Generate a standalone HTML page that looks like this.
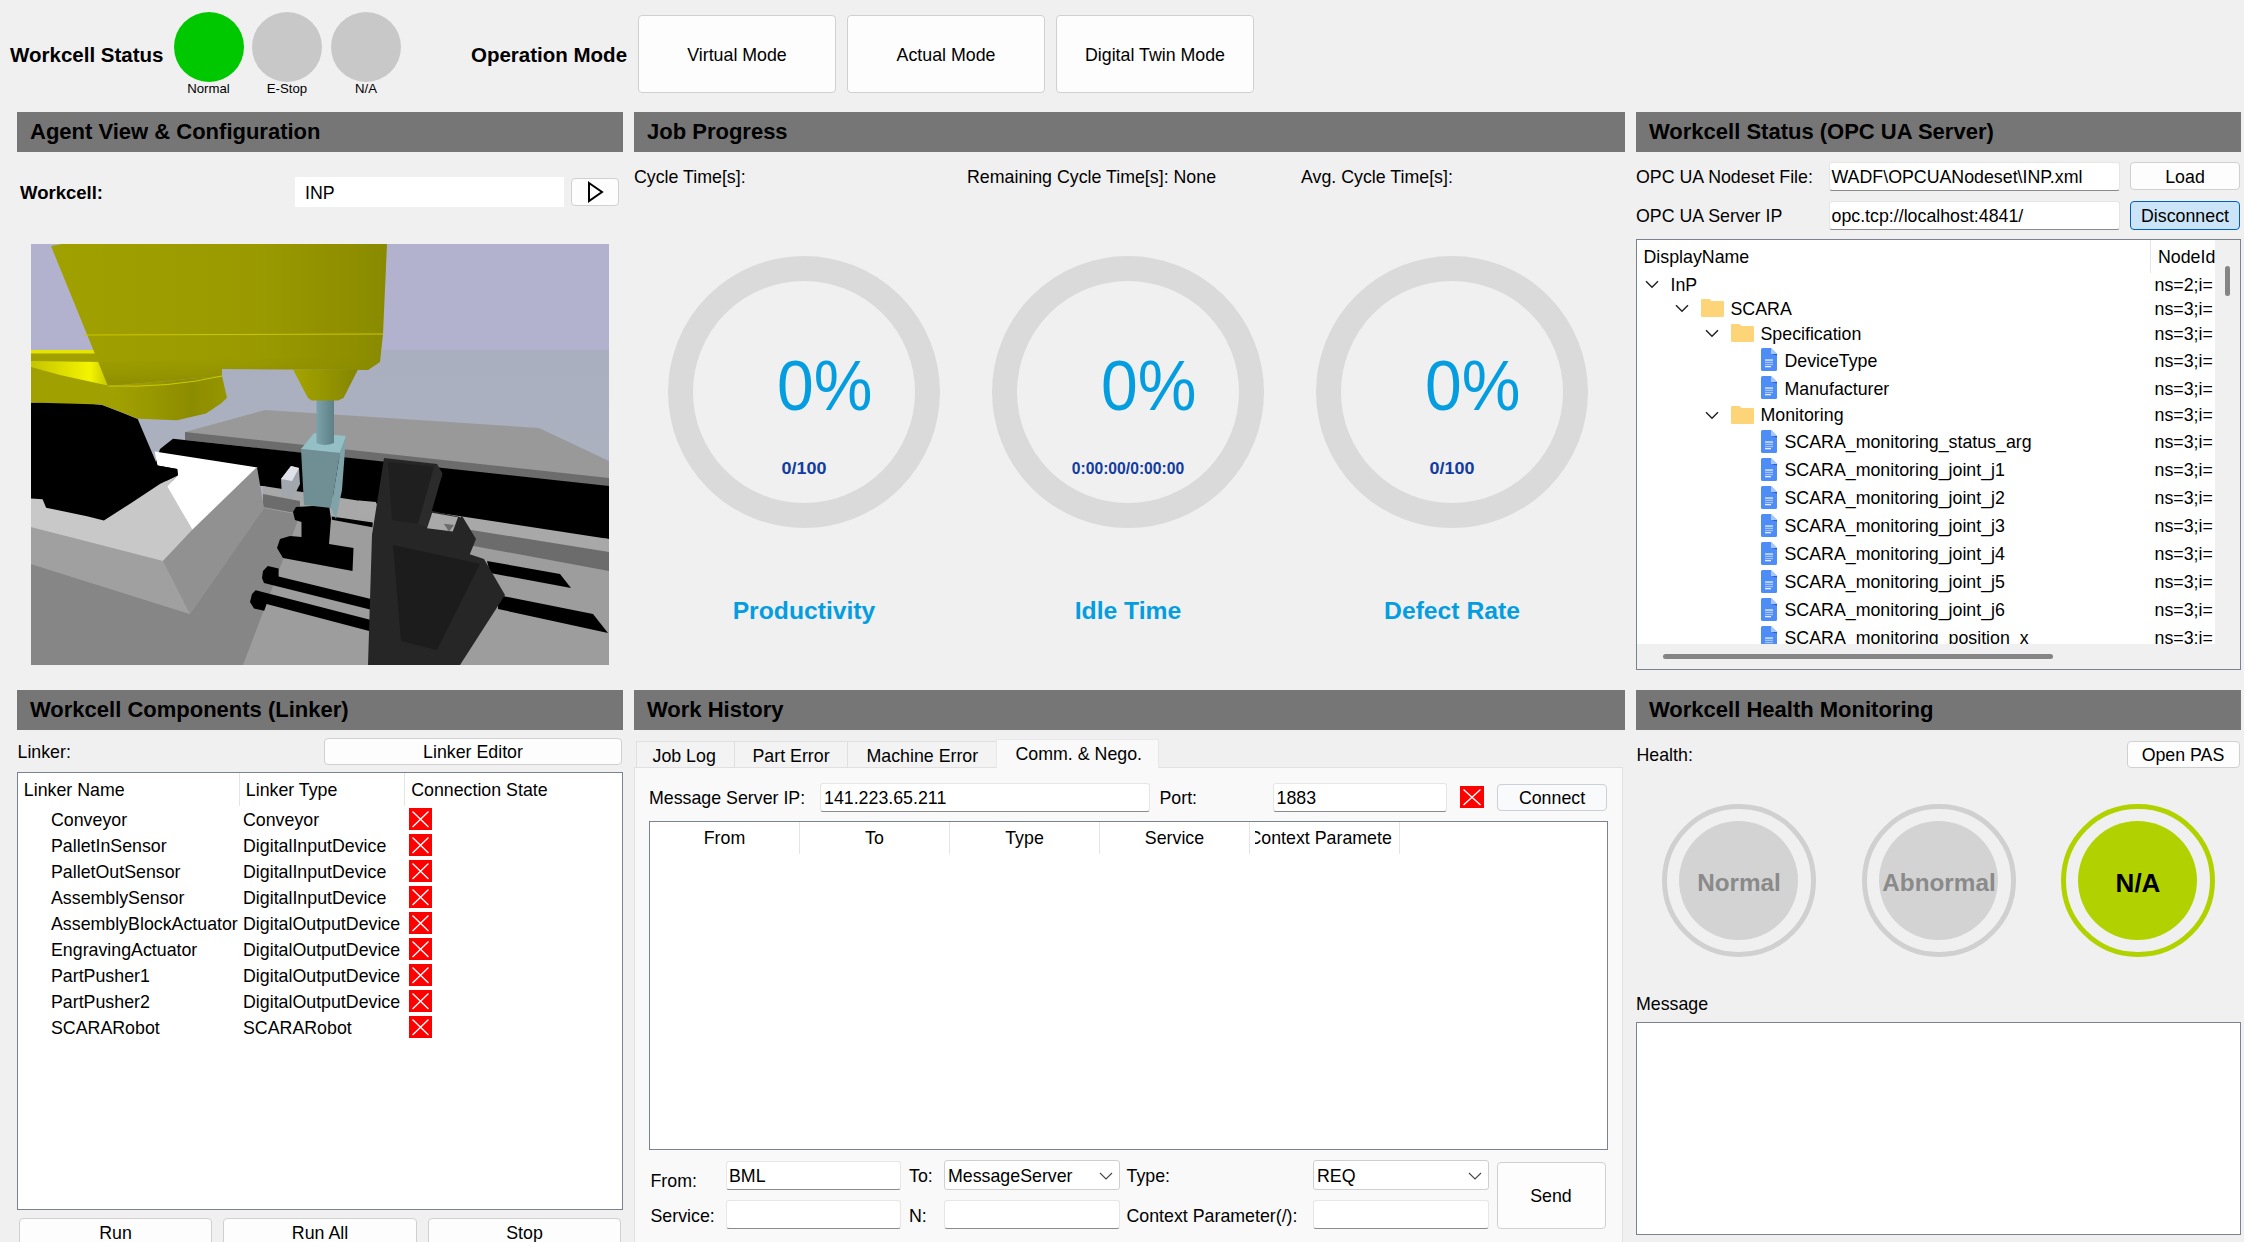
<!DOCTYPE html>
<html><head><meta charset="utf-8">
<style>
*{box-sizing:border-box;margin:0;padding:0}
html,body{width:2244px;height:1242px;overflow:hidden;background:#f0f0f0;font-family:"Liberation Sans",sans-serif;color:#000}
.a{position:absolute;white-space:nowrap}
</style></head><body>
<div class="a" style="left:10px;top:44.65px;font-size:20.5px;line-height:20.5px;font-weight:bold;">Workcell Status</div>
<div class="a" style="left:174px;top:12px;width:70px;height:70px;border-radius:50%;background:#00c800"></div>
<div class="a" style="left:252px;top:12px;width:70px;height:70px;border-radius:50%;background:#c8c8c8"></div>
<div class="a" style="left:331px;top:12px;width:70px;height:70px;border-radius:50%;background:#c8c8c8"></div>
<div class="a" style="left:158.5px;top:82.43px;font-size:13.2px;line-height:13.2px;width:100px;text-align:center;">Normal</div>
<div class="a" style="left:237px;top:82.43px;font-size:13.2px;line-height:13.2px;width:100px;text-align:center;">E-Stop</div>
<div class="a" style="left:316px;top:82.43px;font-size:13.2px;line-height:13.2px;width:100px;text-align:center;">N/A</div>
<div class="a" style="left:471px;top:44.65px;font-size:20.5px;line-height:20.5px;font-weight:bold;">Operation Mode</div>
<div class="a" style="left:638px;top:15px;width:198px;height:78px;background:#fdfdfd;border:1px solid #d0d0d0;border-radius:4px;"></div>
<div class="a" style="left:638px;top:46.93px;font-size:17.8px;line-height:17.8px;width:198px;text-align:center;">Virtual Mode</div>
<div class="a" style="left:847px;top:15px;width:198px;height:78px;background:#fdfdfd;border:1px solid #d0d0d0;border-radius:4px;"></div>
<div class="a" style="left:847px;top:46.93px;font-size:17.8px;line-height:17.8px;width:198px;text-align:center;">Actual Mode</div>
<div class="a" style="left:1056px;top:15px;width:198px;height:78px;background:#fdfdfd;border:1px solid #d0d0d0;border-radius:4px;"></div>
<div class="a" style="left:1056px;top:46.93px;font-size:17.8px;line-height:17.8px;width:198px;text-align:center;">Digital Twin Mode</div>
<div class="a" style="left:17px;top:112px;width:606px;height:40px;background:#767676"></div>
<div class="a" style="left:30px;top:121.18px;font-size:22px;line-height:22px;font-weight:bold;">Agent View &amp; Configuration</div>
<div class="a" style="left:634px;top:112px;width:991px;height:40px;background:#767676"></div>
<div class="a" style="left:647px;top:121.18px;font-size:22px;line-height:22px;font-weight:bold;">Job Progress</div>
<div class="a" style="left:1636px;top:112px;width:605px;height:40px;background:#767676"></div>
<div class="a" style="left:1649px;top:121.18px;font-size:22px;line-height:22px;font-weight:bold;">Workcell Status (OPC UA Server)</div>
<div class="a" style="left:17px;top:690px;width:606px;height:40px;background:#767676"></div>
<div class="a" style="left:30px;top:699.18px;font-size:22px;line-height:22px;font-weight:bold;">Workcell Components (Linker)</div>
<div class="a" style="left:634px;top:690px;width:991px;height:40px;background:#767676"></div>
<div class="a" style="left:647px;top:699.18px;font-size:22px;line-height:22px;font-weight:bold;">Work History</div>
<div class="a" style="left:1636px;top:690px;width:605px;height:40px;background:#767676"></div>
<div class="a" style="left:1649px;top:699.18px;font-size:22px;line-height:22px;font-weight:bold;">Workcell Health Monitoring</div>
<div class="a" style="left:20px;top:184.34px;font-size:18.5px;line-height:18.5px;font-weight:bold;">Workcell:</div>
<div class="a" style="left:295px;top:177px;width:269px;height:30px;background:#fff"></div>
<div class="a" style="left:305px;top:184.93px;font-size:17.8px;line-height:17.8px;">INP</div>
<div class="a" style="left:571px;top:178px;width:48px;height:28px;background:#fdfdfd;border:1px solid #d0d0d0;border-radius:4px;"></div>
<svg class="a" style="left:571px;top:178px" width="48" height="28" viewBox="0 0 48 28"><path d="M18 5 L31 14 L18 23 Z" fill="none" stroke="#000" stroke-width="2"/></svg>
<svg class="a" style="left:31px;top:244px" width="578" height="421" viewBox="31 244 578 421">
<defs>
<linearGradient id="flr" x1="0" y1="0" x2="0" y2="1"><stop offset="0" stop-color="#a9afbf"/><stop offset="1" stop-color="#b0b4c0"/></linearGradient>
<linearGradient id="arm" x1="0" y1="0" x2="1" y2="0"><stop offset="0" stop-color="#a0a000"/><stop offset="0.6" stop-color="#9a9a00"/><stop offset="1" stop-color="#8a8a00"/></linearGradient>
<linearGradient id="streak" x1="0" y1="0" x2="1" y2="0"><stop offset="0" stop-color="#c4c400"/><stop offset="0.75" stop-color="#f4f400"/><stop offset="1" stop-color="#c0c000"/></linearGradient><linearGradient id="link" x1="0" y1="0" x2="1" y2="0.3"><stop offset="0" stop-color="#b8b800"/><stop offset="0.5" stop-color="#e8e800"/><stop offset="1" stop-color="#a6a600"/></linearGradient>
<linearGradient id="cone" x1="0" y1="0" x2="1" y2="0"><stop offset="0" stop-color="#a4a400"/><stop offset="1" stop-color="#858500"/></linearGradient>
<linearGradient id="shaft" x1="0" y1="0" x2="1" y2="0"><stop offset="0" stop-color="#7aa2aa"/><stop offset="1" stop-color="#5e7f86"/></linearGradient>
</defs>
<rect x="31" y="244" width="578" height="421" fill="#b2b2cf"/>
<rect x="31" y="350" width="578" height="315" fill="url(#flr)"/>
<polygon fill="#999999" points="185,432 265,410 539,428 609,461 609,479 185,433"/>
<polygon fill="#6c6c6c" points="185,432 609,478 609,487 185,440"/>
<polygon fill="#000" points="160,449 173,438.7 609,486 609,539 350,512 300,496 263,486 150,480"/>
<polygon fill="#a8a8a8" points="263,486 609,539 609,572 263,508"/>
<polygon fill="#6c6c6c" points="263,494 300,501 300,514 263,508"/><polygon fill="#6c6c6c" points="440,525 609,552 609,572 440,544"/><polygon fill="#000" points="331.8,516.6 372.8,522.6 372.2,530 331.8,523"/>
<polygon fill="#9d9d9d" points="31,540 263,507 609,571 609,665 31,665"/>
<polygon fill="#868686" points="31,564 190,614 264,508 300,515 262,615 243,665 31,665"/>
<polygon fill="#a0a0a0" points="31,527 163,561 190,614 31,564"/>
<polygon fill="#c8c8c8" points="31,498 160.3,483.8 177.9,475.3 167.3,486.6 192.7,530.3 163,561 31,527"/>
<polygon fill="#ffffff" points="154.6,451.4 257.5,467.6 192.7,530.3 167.3,486.6 177.9,475.3 177.2,469 157.5,465.5"/>
<polygon fill="#919191" points="163,561 192,530 257,467 264,508 190,614"/>
<polygon fill="#000" points="31,402.8 53.2,402 81.4,402.8 102.5,404.9 123.6,413.3 137.7,419 157.5,465.5 177.2,469 177.9,475.3 160.3,483.8 129.3,504.2 103.9,520.4 87,516.2 46.1,507.7 42.6,499.3 31,498.6"/>
<polygon fill="#000" points="267.8,566 278.6,568.5 278.6,576.4 372,599.2 372,610 264,583 262,578 263,571"/>
<polygon fill="#000" points="255.7,590.2 372,620.3 372,631.8 266.6,604.1 264.2,610.8 254,608.4 250,602 252,594"/>
<polygon fill="#000" points="487,561 560,574 571,588 490,573"/>
<polygon fill="#000" points="498,595 593,614 608,633 498,609"/>
<polygon fill="#000" points="296,507 329,505 331,519 329,544 353.5,548 352.5,571 283,558 277,548 280,539 290,536 301.5,537 301.5,522 295,520 293,512"/>
<polygon fill="#a9a9a9" points="359,500.6 376,502 376,516 359,514"/>
<polygon fill="#262626" points="384,458 437,464 442,476 428,510 460,517 475,539 469,554 484,559 505,595 460,665 368,665 372,535"/>
<polygon fill="#1c1c1c" points="393,545 480,564 437,650 401,641"/>
<polygon fill="#1f1f1f" points="388,462 434,467 418,524 392,520"/><polygon fill="#2b2b2b" points="434,467 437.3,464.5 442.5,473.5 427,527.6 418,524"/><polygon fill="#a9a9a9" points="432.2,512.8 458,517.3 452.8,531.5 427,528.3"/><polygon fill="#6b6b6b" points="443.8,523.8 454,525 449,531.5"/><polygon fill="#262626" points="452.8,531.5 461.8,515.4 476,539 469.5,555 441,548"/>
<polygon fill="#a2a6ad" points="281,479 291,466 299,468 300,484 293,498 282,497"/>
<polygon fill="#dfe2e8" points="281,479 291,466 299,468 292,481"/>

<polygon fill="#6f8f95" points="301,449 340,453 331,508 304,505"/>
<polygon fill="#93bfc5" points="301,449 314,433 346,436 340,453"/>
<polygon fill="#7fa3a9" points="340,453 346,436 342,490 336,519 331,508"/>



<path fill="url(#shaft)" d="M316.5 399 H334 V443 Q325 447 316.5 443 Z"/><linearGradient id="elb" x1="0" y1="0" x2="1" y2="0"><stop offset="0" stop-color="#a2a200"/><stop offset="0.3" stop-color="#9a9a00"/><stop offset="0.7" stop-color="#8c8c00"/><stop offset="1" stop-color="#969600"/></linearGradient>
<linearGradient id="armv" x1="0" y1="0" x2="0" y2="1"><stop offset="0" stop-color="#8a8a00" stop-opacity="0"/><stop offset="1" stop-color="#808000" stop-opacity="0.55"/></linearGradient>
<polygon fill="#a0a000" points="31,350 96,350 112,386 125,413.4 101,404.6 31,402.6"/>
<polygon fill="#e4e400" points="31,350 96,350 96,353.5 31,353.5"/>
<polygon fill="url(#streak)" points="31,361 100,362 110,386 60,375 31,367"/>
<polygon fill="url(#elb)" points="108,386 222,376 227,397.7 221,403.6 206,413.4 177,420.3 137.6,418.8 125,413.4"/>
<polygon fill="url(#arm)" points="51,246 62,244 387,244 383,334 380,362 368,370 222,369 222,376 108,386"/>
<polygon fill="url(#armv)" points="98,362 381,356 380,362 368,370 222,369 222,376 108,386"/>
<path d="M108 386 Q170 388 222 376" stroke="#cccc00" stroke-width="1" fill="none"/>
<polygon fill="url(#cone)" points="293,369.5 358,369.5 343.5,398 338,400.5 312,400.5 308,398"/>
<line x1="84" y1="335" x2="383" y2="334" stroke="#c8c800" stroke-width="1"/>

</svg>
<div class="a" style="left:634px;top:168.93px;font-size:17.8px;line-height:17.8px;">Cycle Time[s]:</div>
<div class="a" style="left:967px;top:168.93px;font-size:17.8px;line-height:17.8px;">Remaining Cycle Time[s]: None</div>
<div class="a" style="left:1301px;top:168.93px;font-size:17.8px;line-height:17.8px;">Avg. Cycle Time[s]:</div>
<div class="a" style="left:668px;top:255.5px;width:272px;height:272px;border-radius:50%;border:25px solid #dadada"></div>
<div class="a" style="left:776.5px;top:350.40px;font-size:71px;line-height:71px;color:#049de0;transform:scaleX(0.93);transform-origin:0 0;">0%</div>
<div class="a" style="left:704px;top:461.08px;font-size:16.8px;line-height:16.8px;font-weight:bold;width:200px;text-align:center;color:#123c9e;transform:scaleX(1.07);transform-origin:100px 0;">0/100</div>
<div class="a" style="left:704px;top:598.69px;font-size:24.7px;line-height:24.7px;font-weight:bold;width:200px;text-align:center;color:#049de0;">Productivity</div>
<div class="a" style="left:992px;top:255.5px;width:272px;height:272px;border-radius:50%;border:25px solid #dadada"></div>
<div class="a" style="left:1100.5px;top:350.40px;font-size:71px;line-height:71px;color:#049de0;transform:scaleX(0.93);transform-origin:0 0;">0%</div>
<div class="a" style="left:1028px;top:461.08px;font-size:16.8px;line-height:16.8px;font-weight:bold;width:200px;text-align:center;color:#123c9e;transform:scaleX(0.935);transform-origin:100px 0;">0:00:00/0:00:00</div>
<div class="a" style="left:1028px;top:598.69px;font-size:24.7px;line-height:24.7px;font-weight:bold;width:200px;text-align:center;color:#049de0;">Idle Time</div>
<div class="a" style="left:1316px;top:255.5px;width:272px;height:272px;border-radius:50%;border:25px solid #dadada"></div>
<div class="a" style="left:1424.5px;top:350.40px;font-size:71px;line-height:71px;color:#049de0;transform:scaleX(0.93);transform-origin:0 0;">0%</div>
<div class="a" style="left:1352px;top:461.08px;font-size:16.8px;line-height:16.8px;font-weight:bold;width:200px;text-align:center;color:#123c9e;transform:scaleX(1.07);transform-origin:100px 0;">0/100</div>
<div class="a" style="left:1352px;top:598.69px;font-size:24.7px;line-height:24.7px;font-weight:bold;width:200px;text-align:center;color:#049de0;">Defect Rate</div>
<div class="a" style="left:1636px;top:168.93px;font-size:17.8px;line-height:17.8px;">OPC UA Nodeset File:</div>
<div class="a" style="left:1636px;top:207.93px;font-size:17.8px;line-height:17.8px;">OPC UA Server IP</div>
<div class="a" style="left:1829px;top:162px;width:291px;height:29px;background:#fff;border:1px solid #e6e6e6;border-bottom:1px solid #8a8a8a;border-radius:3px;"></div>
<div class="a" style="left:1831.5px;top:168.93px;font-size:17.8px;line-height:17.8px;">WADF\OPCUANodeset\INP.xml</div>
<div class="a" style="left:1829px;top:201px;width:291px;height:29px;background:#fff;border:1px solid #e6e6e6;border-bottom:1px solid #8a8a8a;border-radius:3px;"></div>
<div class="a" style="left:1831.5px;top:207.93px;font-size:17.8px;line-height:17.8px;">opc.tcp://localhost:4841/</div>
<div class="a" style="left:2130px;top:162px;width:110px;height:28px;background:#fdfdfd;border:1px solid #d0d0d0;border-radius:4px;"></div>
<div class="a" style="left:2130px;top:168.93px;font-size:17.8px;line-height:17.8px;width:110px;text-align:center;">Load</div>
<div class="a" style="left:2130px;top:201px;width:110px;height:29px;background:#cce4f7;border:1.5px solid #005fb8;border-radius:4px"></div>
<div class="a" style="left:2130px;top:207.93px;font-size:17.8px;line-height:17.8px;width:110px;text-align:center;">Disconnect</div>
<div class="a" style="left:1636px;top:239px;width:605px;height:431px;background:#fff;border:1px solid #7a8290"></div>
<div class="a" style="left:2215px;top:240px;width:25px;height:404px;background:#f0f0f0"></div>
<div class="a" style="left:1637px;top:644px;width:603px;height:25px;background:#f0f0f0"></div>
<div class="a" style="left:2225px;top:266px;width:5px;height:30px;border-radius:3px;background:#858585"></div>
<div class="a" style="left:1663px;top:654px;width:390px;height:5px;border-radius:3px;background:#858585"></div>
<div class="a" style="left:2150px;top:240px;width:1px;height:33px;background:#e5e5e5"></div>
<div class="a" style="left:1637px;top:240px;width:578px;height:404px;overflow:hidden">
<div class="a" style="left:6.5px;top:8.93px;font-size:17.8px;line-height:17.8px;">DisplayName</div>
<div class="a" style="left:521px;top:8.93px;font-size:17.8px;line-height:17.8px;">NodeId</div>
<svg class="a" style="left:7.5px;top:40px" width="14" height="9" viewBox="0 0 14 9"><path d="M1 1.2 L7 7.2 L13 1.2" fill="none" stroke="#222" stroke-width="1.5"/></svg>
<div class="a" style="left:33.5px;top:36.93px;font-size:17.8px;line-height:17.8px;">InP</div>
<div class="a" style="left:517.5px;top:36.93px;font-size:17.8px;line-height:17.8px;">ns=2;i=</div>
<svg class="a" style="left:37.5px;top:64px" width="14" height="9" viewBox="0 0 14 9"><path d="M1 1.2 L7 7.2 L13 1.2" fill="none" stroke="#222" stroke-width="1.5"/></svg>
<svg class="a" style="left:63.5px;top:59px" width="23" height="18" viewBox="0 0 23 18"><path d="M0 1.2 Q0 0 1.2 0 L8.5 0 L10.5 2 L21.8 2 Q23 2 23 3.2 L23 16.8 Q23 18 21.8 18 L1.2 18 Q0 18 0 16.8 Z" fill="#fdd477"/></svg>
<div class="a" style="left:93.5px;top:60.93px;font-size:17.8px;line-height:17.8px;">SCARA</div>
<div class="a" style="left:517.5px;top:60.93px;font-size:17.8px;line-height:17.8px;">ns=3;i=</div>
<svg class="a" style="left:67.5px;top:89px" width="14" height="9" viewBox="0 0 14 9"><path d="M1 1.2 L7 7.2 L13 1.2" fill="none" stroke="#222" stroke-width="1.5"/></svg>
<svg class="a" style="left:93.5px;top:84px" width="23" height="18" viewBox="0 0 23 18"><path d="M0 1.2 Q0 0 1.2 0 L8.5 0 L10.5 2 L21.8 2 Q23 2 23 3.2 L23 16.8 Q23 18 21.8 18 L1.2 18 Q0 18 0 16.8 Z" fill="#fdd477"/></svg>
<div class="a" style="left:123.5px;top:85.93px;font-size:17.8px;line-height:17.8px;">Specification</div>
<div class="a" style="left:517.5px;top:85.93px;font-size:17.8px;line-height:17.8px;">ns=3;i=</div>
<svg class="a" style="left:124px;top:108px" width="16" height="23" viewBox="0 0 16 23"><path d="M1.5 0 H10 L16 6 V21.5 Q16 23 14.5 23 H1.5 Q0 23 0 21.5 V1.5 Q0 0 1.5 0 Z" fill="#4e8df5"/><path d="M10 0 L16 6 H10 Z" fill="#a9c8fa"/><path d="M10 6 H16 V7.6 Z" fill="#2f5bc4"/><rect x="4" y="11.4" width="8" height="1.3" fill="#e4edfd"/><rect x="4" y="13.7" width="8" height="1.3" fill="#a4c2f8"/><rect x="4" y="15.9" width="8" height="1.3" fill="#a4c2f8"/><rect x="4" y="18" width="6" height="1.3" fill="#e4edfd"/></svg>
<div class="a" style="left:147.5px;top:112.93px;font-size:17.8px;line-height:17.8px;">DeviceType</div>
<div class="a" style="left:517.5px;top:112.93px;font-size:17.8px;line-height:17.8px;">ns=3;i=</div>
<svg class="a" style="left:124px;top:136px" width="16" height="23" viewBox="0 0 16 23"><path d="M1.5 0 H10 L16 6 V21.5 Q16 23 14.5 23 H1.5 Q0 23 0 21.5 V1.5 Q0 0 1.5 0 Z" fill="#4e8df5"/><path d="M10 0 L16 6 H10 Z" fill="#a9c8fa"/><path d="M10 6 H16 V7.6 Z" fill="#2f5bc4"/><rect x="4" y="11.4" width="8" height="1.3" fill="#e4edfd"/><rect x="4" y="13.7" width="8" height="1.3" fill="#a4c2f8"/><rect x="4" y="15.9" width="8" height="1.3" fill="#a4c2f8"/><rect x="4" y="18" width="6" height="1.3" fill="#e4edfd"/></svg>
<div class="a" style="left:147.5px;top:140.93px;font-size:17.8px;line-height:17.8px;">Manufacturer</div>
<div class="a" style="left:517.5px;top:140.93px;font-size:17.8px;line-height:17.8px;">ns=3;i=</div>
<svg class="a" style="left:67.5px;top:170.5px" width="14" height="9" viewBox="0 0 14 9"><path d="M1 1.2 L7 7.2 L13 1.2" fill="none" stroke="#222" stroke-width="1.5"/></svg>
<svg class="a" style="left:93.5px;top:165.5px" width="23" height="18" viewBox="0 0 23 18"><path d="M0 1.2 Q0 0 1.2 0 L8.5 0 L10.5 2 L21.8 2 Q23 2 23 3.2 L23 16.8 Q23 18 21.8 18 L1.2 18 Q0 18 0 16.8 Z" fill="#fdd477"/></svg>
<div class="a" style="left:123.5px;top:167.43px;font-size:17.8px;line-height:17.8px;">Monitoring</div>
<div class="a" style="left:517.5px;top:167.43px;font-size:17.8px;line-height:17.8px;">ns=3;i=</div>
<svg class="a" style="left:124px;top:189.5px" width="16" height="23" viewBox="0 0 16 23"><path d="M1.5 0 H10 L16 6 V21.5 Q16 23 14.5 23 H1.5 Q0 23 0 21.5 V1.5 Q0 0 1.5 0 Z" fill="#4e8df5"/><path d="M10 0 L16 6 H10 Z" fill="#a9c8fa"/><path d="M10 6 H16 V7.6 Z" fill="#2f5bc4"/><rect x="4" y="11.4" width="8" height="1.3" fill="#e4edfd"/><rect x="4" y="13.7" width="8" height="1.3" fill="#a4c2f8"/><rect x="4" y="15.9" width="8" height="1.3" fill="#a4c2f8"/><rect x="4" y="18" width="6" height="1.3" fill="#e4edfd"/></svg>
<div class="a" style="left:147.5px;top:194.43px;font-size:17.8px;line-height:17.8px;">SCARA_monitoring_status_arg</div>
<div class="a" style="left:517.5px;top:194.43px;font-size:17.8px;line-height:17.8px;">ns=3;i=</div>
<svg class="a" style="left:124px;top:217.5px" width="16" height="23" viewBox="0 0 16 23"><path d="M1.5 0 H10 L16 6 V21.5 Q16 23 14.5 23 H1.5 Q0 23 0 21.5 V1.5 Q0 0 1.5 0 Z" fill="#4e8df5"/><path d="M10 0 L16 6 H10 Z" fill="#a9c8fa"/><path d="M10 6 H16 V7.6 Z" fill="#2f5bc4"/><rect x="4" y="11.4" width="8" height="1.3" fill="#e4edfd"/><rect x="4" y="13.7" width="8" height="1.3" fill="#a4c2f8"/><rect x="4" y="15.9" width="8" height="1.3" fill="#a4c2f8"/><rect x="4" y="18" width="6" height="1.3" fill="#e4edfd"/></svg>
<div class="a" style="left:147.5px;top:222.43px;font-size:17.8px;line-height:17.8px;">SCARA_monitoring_joint_j1</div>
<div class="a" style="left:517.5px;top:222.43px;font-size:17.8px;line-height:17.8px;">ns=3;i=</div>
<svg class="a" style="left:124px;top:245.5px" width="16" height="23" viewBox="0 0 16 23"><path d="M1.5 0 H10 L16 6 V21.5 Q16 23 14.5 23 H1.5 Q0 23 0 21.5 V1.5 Q0 0 1.5 0 Z" fill="#4e8df5"/><path d="M10 0 L16 6 H10 Z" fill="#a9c8fa"/><path d="M10 6 H16 V7.6 Z" fill="#2f5bc4"/><rect x="4" y="11.4" width="8" height="1.3" fill="#e4edfd"/><rect x="4" y="13.7" width="8" height="1.3" fill="#a4c2f8"/><rect x="4" y="15.9" width="8" height="1.3" fill="#a4c2f8"/><rect x="4" y="18" width="6" height="1.3" fill="#e4edfd"/></svg>
<div class="a" style="left:147.5px;top:250.43px;font-size:17.8px;line-height:17.8px;">SCARA_monitoring_joint_j2</div>
<div class="a" style="left:517.5px;top:250.43px;font-size:17.8px;line-height:17.8px;">ns=3;i=</div>
<svg class="a" style="left:124px;top:273.5px" width="16" height="23" viewBox="0 0 16 23"><path d="M1.5 0 H10 L16 6 V21.5 Q16 23 14.5 23 H1.5 Q0 23 0 21.5 V1.5 Q0 0 1.5 0 Z" fill="#4e8df5"/><path d="M10 0 L16 6 H10 Z" fill="#a9c8fa"/><path d="M10 6 H16 V7.6 Z" fill="#2f5bc4"/><rect x="4" y="11.4" width="8" height="1.3" fill="#e4edfd"/><rect x="4" y="13.7" width="8" height="1.3" fill="#a4c2f8"/><rect x="4" y="15.9" width="8" height="1.3" fill="#a4c2f8"/><rect x="4" y="18" width="6" height="1.3" fill="#e4edfd"/></svg>
<div class="a" style="left:147.5px;top:278.43px;font-size:17.8px;line-height:17.8px;">SCARA_monitoring_joint_j3</div>
<div class="a" style="left:517.5px;top:278.43px;font-size:17.8px;line-height:17.8px;">ns=3;i=</div>
<svg class="a" style="left:124px;top:301.5px" width="16" height="23" viewBox="0 0 16 23"><path d="M1.5 0 H10 L16 6 V21.5 Q16 23 14.5 23 H1.5 Q0 23 0 21.5 V1.5 Q0 0 1.5 0 Z" fill="#4e8df5"/><path d="M10 0 L16 6 H10 Z" fill="#a9c8fa"/><path d="M10 6 H16 V7.6 Z" fill="#2f5bc4"/><rect x="4" y="11.4" width="8" height="1.3" fill="#e4edfd"/><rect x="4" y="13.7" width="8" height="1.3" fill="#a4c2f8"/><rect x="4" y="15.9" width="8" height="1.3" fill="#a4c2f8"/><rect x="4" y="18" width="6" height="1.3" fill="#e4edfd"/></svg>
<div class="a" style="left:147.5px;top:306.43px;font-size:17.8px;line-height:17.8px;">SCARA_monitoring_joint_j4</div>
<div class="a" style="left:517.5px;top:306.43px;font-size:17.8px;line-height:17.8px;">ns=3;i=</div>
<svg class="a" style="left:124px;top:329.5px" width="16" height="23" viewBox="0 0 16 23"><path d="M1.5 0 H10 L16 6 V21.5 Q16 23 14.5 23 H1.5 Q0 23 0 21.5 V1.5 Q0 0 1.5 0 Z" fill="#4e8df5"/><path d="M10 0 L16 6 H10 Z" fill="#a9c8fa"/><path d="M10 6 H16 V7.6 Z" fill="#2f5bc4"/><rect x="4" y="11.4" width="8" height="1.3" fill="#e4edfd"/><rect x="4" y="13.7" width="8" height="1.3" fill="#a4c2f8"/><rect x="4" y="15.9" width="8" height="1.3" fill="#a4c2f8"/><rect x="4" y="18" width="6" height="1.3" fill="#e4edfd"/></svg>
<div class="a" style="left:147.5px;top:334.43px;font-size:17.8px;line-height:17.8px;">SCARA_monitoring_joint_j5</div>
<div class="a" style="left:517.5px;top:334.43px;font-size:17.8px;line-height:17.8px;">ns=3;i=</div>
<svg class="a" style="left:124px;top:357.5px" width="16" height="23" viewBox="0 0 16 23"><path d="M1.5 0 H10 L16 6 V21.5 Q16 23 14.5 23 H1.5 Q0 23 0 21.5 V1.5 Q0 0 1.5 0 Z" fill="#4e8df5"/><path d="M10 0 L16 6 H10 Z" fill="#a9c8fa"/><path d="M10 6 H16 V7.6 Z" fill="#2f5bc4"/><rect x="4" y="11.4" width="8" height="1.3" fill="#e4edfd"/><rect x="4" y="13.7" width="8" height="1.3" fill="#a4c2f8"/><rect x="4" y="15.9" width="8" height="1.3" fill="#a4c2f8"/><rect x="4" y="18" width="6" height="1.3" fill="#e4edfd"/></svg>
<div class="a" style="left:147.5px;top:362.43px;font-size:17.8px;line-height:17.8px;">SCARA_monitoring_joint_j6</div>
<div class="a" style="left:517.5px;top:362.43px;font-size:17.8px;line-height:17.8px;">ns=3;i=</div>
<svg class="a" style="left:124px;top:385.5px" width="16" height="23" viewBox="0 0 16 23"><path d="M1.5 0 H10 L16 6 V21.5 Q16 23 14.5 23 H1.5 Q0 23 0 21.5 V1.5 Q0 0 1.5 0 Z" fill="#4e8df5"/><path d="M10 0 L16 6 H10 Z" fill="#a9c8fa"/><path d="M10 6 H16 V7.6 Z" fill="#2f5bc4"/><rect x="4" y="11.4" width="8" height="1.3" fill="#e4edfd"/><rect x="4" y="13.7" width="8" height="1.3" fill="#a4c2f8"/><rect x="4" y="15.9" width="8" height="1.3" fill="#a4c2f8"/><rect x="4" y="18" width="6" height="1.3" fill="#e4edfd"/></svg>
<div class="a" style="left:147.5px;top:390.43px;font-size:17.8px;line-height:17.8px;">SCARA_monitoring_position_x</div>
<div class="a" style="left:517.5px;top:390.43px;font-size:17.8px;line-height:17.8px;">ns=3;i=</div>
</div>
<div class="a" style="left:17.5px;top:743.93px;font-size:17.8px;line-height:17.8px;">Linker:</div>
<div class="a" style="left:324px;top:737.5px;width:298px;height:27.0px;background:#fdfdfd;border:1px solid #d0d0d0;border-radius:4px;"></div>
<div class="a" style="left:324px;top:743.93px;font-size:17.8px;line-height:17.8px;width:298px;text-align:center;">Linker Editor</div>
<div class="a" style="left:17px;top:772px;width:606px;height:438px;background:#fff;border:1px solid #7a8290"></div>
<div class="a" style="left:239px;top:773px;width:1px;height:33px;background:#e5e5e5"></div>
<div class="a" style="left:404px;top:773px;width:1px;height:33px;background:#e5e5e5"></div>
<div class="a" style="left:23.8px;top:781.93px;font-size:17.8px;line-height:17.8px;">Linker Name</div>
<div class="a" style="left:245.8px;top:781.93px;font-size:17.8px;line-height:17.8px;">Linker Type</div>
<div class="a" style="left:411.2px;top:781.93px;font-size:17.8px;line-height:17.8px;">Connection State</div>
<div class="a" style="left:51px;top:811.93px;font-size:17.8px;line-height:17.8px;">Conveyor</div>
<div class="a" style="left:243px;top:811.93px;font-size:17.8px;line-height:17.8px;">Conveyor</div>
<svg class="a" style="left:409px;top:808px" width="23" height="22" viewBox="0 0 23 22"><rect width="23" height="22" fill="#ff0000"/><path d="M3.5 3.5 L19.5 19 M19.5 3.5 L3.5 19" stroke="#fff" stroke-width="1.4"/></svg>
<div class="a" style="left:51px;top:837.93px;font-size:17.8px;line-height:17.8px;">PalletInSensor</div>
<div class="a" style="left:243px;top:837.93px;font-size:17.8px;line-height:17.8px;">DigitalInputDevice</div>
<svg class="a" style="left:409px;top:834px" width="23" height="22" viewBox="0 0 23 22"><rect width="23" height="22" fill="#ff0000"/><path d="M3.5 3.5 L19.5 19 M19.5 3.5 L3.5 19" stroke="#fff" stroke-width="1.4"/></svg>
<div class="a" style="left:51px;top:863.93px;font-size:17.8px;line-height:17.8px;">PalletOutSensor</div>
<div class="a" style="left:243px;top:863.93px;font-size:17.8px;line-height:17.8px;">DigitalInputDevice</div>
<svg class="a" style="left:409px;top:860px" width="23" height="22" viewBox="0 0 23 22"><rect width="23" height="22" fill="#ff0000"/><path d="M3.5 3.5 L19.5 19 M19.5 3.5 L3.5 19" stroke="#fff" stroke-width="1.4"/></svg>
<div class="a" style="left:51px;top:889.93px;font-size:17.8px;line-height:17.8px;">AssemblySensor</div>
<div class="a" style="left:243px;top:889.93px;font-size:17.8px;line-height:17.8px;">DigitalInputDevice</div>
<svg class="a" style="left:409px;top:886px" width="23" height="22" viewBox="0 0 23 22"><rect width="23" height="22" fill="#ff0000"/><path d="M3.5 3.5 L19.5 19 M19.5 3.5 L3.5 19" stroke="#fff" stroke-width="1.4"/></svg>
<div class="a" style="left:51px;top:915.93px;font-size:17.8px;line-height:17.8px;">AssemblyBlockActuator</div>
<div class="a" style="left:243px;top:915.93px;font-size:17.8px;line-height:17.8px;">DigitalOutputDevice</div>
<svg class="a" style="left:409px;top:912px" width="23" height="22" viewBox="0 0 23 22"><rect width="23" height="22" fill="#ff0000"/><path d="M3.5 3.5 L19.5 19 M19.5 3.5 L3.5 19" stroke="#fff" stroke-width="1.4"/></svg>
<div class="a" style="left:51px;top:941.93px;font-size:17.8px;line-height:17.8px;">EngravingActuator</div>
<div class="a" style="left:243px;top:941.93px;font-size:17.8px;line-height:17.8px;">DigitalOutputDevice</div>
<svg class="a" style="left:409px;top:938px" width="23" height="22" viewBox="0 0 23 22"><rect width="23" height="22" fill="#ff0000"/><path d="M3.5 3.5 L19.5 19 M19.5 3.5 L3.5 19" stroke="#fff" stroke-width="1.4"/></svg>
<div class="a" style="left:51px;top:967.93px;font-size:17.8px;line-height:17.8px;">PartPusher1</div>
<div class="a" style="left:243px;top:967.93px;font-size:17.8px;line-height:17.8px;">DigitalOutputDevice</div>
<svg class="a" style="left:409px;top:964px" width="23" height="22" viewBox="0 0 23 22"><rect width="23" height="22" fill="#ff0000"/><path d="M3.5 3.5 L19.5 19 M19.5 3.5 L3.5 19" stroke="#fff" stroke-width="1.4"/></svg>
<div class="a" style="left:51px;top:993.93px;font-size:17.8px;line-height:17.8px;">PartPusher2</div>
<div class="a" style="left:243px;top:993.93px;font-size:17.8px;line-height:17.8px;">DigitalOutputDevice</div>
<svg class="a" style="left:409px;top:990px" width="23" height="22" viewBox="0 0 23 22"><rect width="23" height="22" fill="#ff0000"/><path d="M3.5 3.5 L19.5 19 M19.5 3.5 L3.5 19" stroke="#fff" stroke-width="1.4"/></svg>
<div class="a" style="left:51px;top:1019.93px;font-size:17.8px;line-height:17.8px;">SCARARobot</div>
<div class="a" style="left:243px;top:1019.93px;font-size:17.8px;line-height:17.8px;">SCARARobot</div>
<svg class="a" style="left:409px;top:1016px" width="23" height="22" viewBox="0 0 23 22"><rect width="23" height="22" fill="#ff0000"/><path d="M3.5 3.5 L19.5 19 M19.5 3.5 L3.5 19" stroke="#fff" stroke-width="1.4"/></svg>
<div class="a" style="left:19px;top:1218px;width:193px;height:42px;background:#fdfdfd;border:1px solid #d0d0d0;border-radius:4px;"></div>
<div class="a" style="left:19px;top:1224.93px;font-size:17.8px;line-height:17.8px;width:193px;text-align:center;">Run</div>
<div class="a" style="left:223px;top:1218px;width:194px;height:42px;background:#fdfdfd;border:1px solid #d0d0d0;border-radius:4px;"></div>
<div class="a" style="left:223px;top:1224.93px;font-size:17.8px;line-height:17.8px;width:194px;text-align:center;">Run All</div>
<div class="a" style="left:428px;top:1218px;width:193px;height:42px;background:#fdfdfd;border:1px solid #d0d0d0;border-radius:4px;"></div>
<div class="a" style="left:428px;top:1224.93px;font-size:17.8px;line-height:17.8px;width:193px;text-align:center;">Stop</div>
<div class="a" style="left:634px;top:767px;width:989px;height:480px;background:#f9f9f9;border:1px solid #e0e0e0"></div>
<div class="a" style="left:636px;top:741px;width:99px;height:26px;background:#f3f3f3;border:1px solid #e0e0e0;border-bottom:none"></div>
<div class="a" style="left:652.5px;top:748.43px;font-size:17.8px;line-height:17.8px;">Job Log</div>
<div class="a" style="left:734px;top:741px;width:114px;height:26px;background:#f3f3f3;border:1px solid #e0e0e0;border-bottom:none"></div>
<div class="a" style="left:752.5px;top:748.43px;font-size:17.8px;line-height:17.8px;">Part Error</div>
<div class="a" style="left:847px;top:741px;width:150px;height:26px;background:#f3f3f3;border:1px solid #e0e0e0;border-bottom:none"></div>
<div class="a" style="left:866.5px;top:748.43px;font-size:17.8px;line-height:17.8px;">Machine Error</div>
<div class="a" style="left:996px;top:739px;width:163px;height:29px;background:#f9f9f9;border:1px solid #e8e8e8;border-bottom:none"></div>
<div class="a" style="left:1015.5px;top:746.43px;font-size:17.8px;line-height:17.8px;">Comm. &amp; Nego.</div>
<div class="a" style="left:649px;top:789.93px;font-size:17.8px;line-height:17.8px;">Message Server IP:</div>
<div class="a" style="left:820px;top:783px;width:330px;height:29px;background:#fff;border:1px solid #e6e6e6;border-bottom:1px solid #8a8a8a;border-radius:3px;"></div>
<div class="a" style="left:824px;top:789.93px;font-size:17.8px;line-height:17.8px;">141.223.65.211</div>
<div class="a" style="left:1159.5px;top:789.93px;font-size:17.8px;line-height:17.8px;">Port:</div>
<div class="a" style="left:1272.5px;top:783px;width:174.5px;height:29px;background:#fff;border:1px solid #e6e6e6;border-bottom:1px solid #8a8a8a;border-radius:3px;"></div>
<div class="a" style="left:1276.5px;top:789.93px;font-size:17.8px;line-height:17.8px;">1883</div>
<svg class="a" style="left:1460px;top:786px" width="24" height="22" viewBox="0 0 24 22"><rect width="24" height="22" fill="#ff0000"/><path d="M3.5 3.5 L20.5 19 M20.5 3.5 L3.5 19" stroke="#fff" stroke-width="1.4"/></svg>
<div class="a" style="left:1497px;top:783.5px;width:110px;height:27.5px;background:#fdfdfd;border:1px solid #d0d0d0;border-radius:4px;background:#f9fafc;border-color:#ccd0d8"></div>
<div class="a" style="left:1497px;top:789.93px;font-size:17.8px;line-height:17.8px;width:110px;text-align:center;">Connect</div>
<div class="a" style="left:649px;top:821px;width:959px;height:329px;background:#fff;border:1px solid #7a8290"></div>
<div class="a" style="left:799px;top:822px;width:1px;height:32px;background:#e5e5e5"></div>
<div class="a" style="left:949px;top:822px;width:1px;height:32px;background:#e5e5e5"></div>
<div class="a" style="left:1099px;top:822px;width:1px;height:32px;background:#e5e5e5"></div>
<div class="a" style="left:1249px;top:822px;width:1px;height:32px;background:#e5e5e5"></div>
<div class="a" style="left:1399px;top:822px;width:1px;height:32px;background:#e5e5e5"></div>
<div class="a" style="left:654.5px;top:830.43px;font-size:17.8px;line-height:17.8px;width:140px;text-align:center;">From</div>
<div class="a" style="left:804.5px;top:830.43px;font-size:17.8px;line-height:17.8px;width:140px;text-align:center;">To</div>
<div class="a" style="left:954.5px;top:830.43px;font-size:17.8px;line-height:17.8px;width:140px;text-align:center;">Type</div>
<div class="a" style="left:1104.5px;top:830.43px;font-size:17.8px;line-height:17.8px;width:140px;text-align:center;">Service</div>
<div class="a" style="left:1255px;top:822px;width:137px;height:32px;overflow:hidden"><div class="a" style="left:-6.5px;top:8.43px;font-size:17.8px;line-height:17.8px;">Context Parameter</div>
</div>
<div class="a" style="left:650.5px;top:1173.43px;font-size:17.8px;line-height:17.8px;">From:</div>
<div class="a" style="left:726px;top:1160.5px;width:175px;height:29.0px;background:#fff;border:1px solid #e6e6e6;border-bottom:1px solid #8a8a8a;border-radius:3px;"></div>
<div class="a" style="left:729px;top:1168.43px;font-size:17.8px;line-height:17.8px;">BML</div>
<div class="a" style="left:909px;top:1167.93px;font-size:17.8px;line-height:17.8px;">To:</div>
<div class="a" style="left:944px;top:1160px;width:175.5px;height:29.5px;background:#fff;border:1px solid #cfcfcf;border-radius:3px"></div>
<div class="a" style="left:948px;top:1168.43px;font-size:17.8px;line-height:17.8px;">MessageServer</div>
<div class="a" style="left:1126.5px;top:1167.93px;font-size:17.8px;line-height:17.8px;">Type:</div>
<div class="a" style="left:1313px;top:1160px;width:175.5px;height:29.5px;background:#fff;border:1px solid #cfcfcf;border-radius:3px"></div>
<div class="a" style="left:1317px;top:1168.43px;font-size:17.8px;line-height:17.8px;">REQ</div>
<svg class="a" style="left:1099px;top:1172px" width="14" height="8" viewBox="0 0 14 8"><path d="M1 1 L7 7 L13 1" fill="none" stroke="#444" stroke-width="1.1"/></svg>
<svg class="a" style="left:1468px;top:1172px" width="14" height="8" viewBox="0 0 14 8"><path d="M1 1 L7 7 L13 1" fill="none" stroke="#444" stroke-width="1.1"/></svg>
<div class="a" style="left:1496.5px;top:1161.5px;width:109.0px;height:67.0px;background:#fdfdfd;border:1px solid #d0d0d0;border-radius:4px;"></div>
<div class="a" style="left:1496.5px;top:1187.93px;font-size:17.8px;line-height:17.8px;width:109px;text-align:center;">Send</div>
<div class="a" style="left:650.5px;top:1208.43px;font-size:17.8px;line-height:17.8px;">Service:</div>
<div class="a" style="left:726px;top:1200px;width:175px;height:29px;background:#fff;border:1px solid #e6e6e6;border-bottom:1px solid #8a8a8a;border-radius:3px;"></div>
<div class="a" style="left:909px;top:1208.43px;font-size:17.8px;line-height:17.8px;">N:</div>
<div class="a" style="left:944px;top:1200px;width:175.5px;height:29px;background:#fff;border:1px solid #e6e6e6;border-bottom:1px solid #8a8a8a;border-radius:3px;"></div>
<div class="a" style="left:1126.5px;top:1208.43px;font-size:17.8px;line-height:17.8px;">Context Parameter(/):</div>
<div class="a" style="left:1313px;top:1200px;width:175.5px;height:29px;background:#fff;border:1px solid #e6e6e6;border-bottom:1px solid #8a8a8a;border-radius:3px;"></div>
<div class="a" style="left:1636.5px;top:746.93px;font-size:17.8px;line-height:17.8px;">Health:</div>
<div class="a" style="left:2126.5px;top:740.5px;width:113.0px;height:27.0px;background:#fdfdfd;border:1px solid #d0d0d0;border-radius:4px;"></div>
<div class="a" style="left:2126.5px;top:746.93px;font-size:17.8px;line-height:17.8px;width:113px;text-align:center;">Open PAS</div>
<div class="a" style="left:1662px;top:803.8px;width:153.5px;height:153.5px;border-radius:50%;border:5px solid #d0d0d0"></div>
<div class="a" style="left:1679px;top:821px;width:119px;height:119px;border-radius:50%;background:#d3d3d3"></div>
<div class="a" style="left:1659px;top:871.43px;font-size:24.3px;line-height:24.3px;font-weight:bold;width:160px;text-align:center;color:#8a8a8a;">Normal</div>
<div class="a" style="left:1862px;top:803.8px;width:153.5px;height:153.5px;border-radius:50%;border:5px solid #d0d0d0"></div>
<div class="a" style="left:1879px;top:821px;width:119px;height:119px;border-radius:50%;background:#d3d3d3"></div>
<div class="a" style="left:1859px;top:871.43px;font-size:24.3px;line-height:24.3px;font-weight:bold;width:160px;text-align:center;color:#8a8a8a;">Abnormal</div>
<div class="a" style="left:2061px;top:803.8px;width:153.5px;height:153.5px;border-radius:50%;border:5px solid #b2d200"></div>
<div class="a" style="left:2078px;top:821px;width:119px;height:119px;border-radius:50%;background:#b2d200"></div>
<div class="a" style="left:2058px;top:869.99px;font-size:26px;line-height:26px;font-weight:bold;width:160px;text-align:center;color:#000;">N/A</div>
<div class="a" style="left:1636px;top:995.93px;font-size:17.8px;line-height:17.8px;">Message</div>
<div class="a" style="left:1636px;top:1022px;width:605px;height:213px;background:#fff;border:1px solid #7a8290"></div>
</body></html>
